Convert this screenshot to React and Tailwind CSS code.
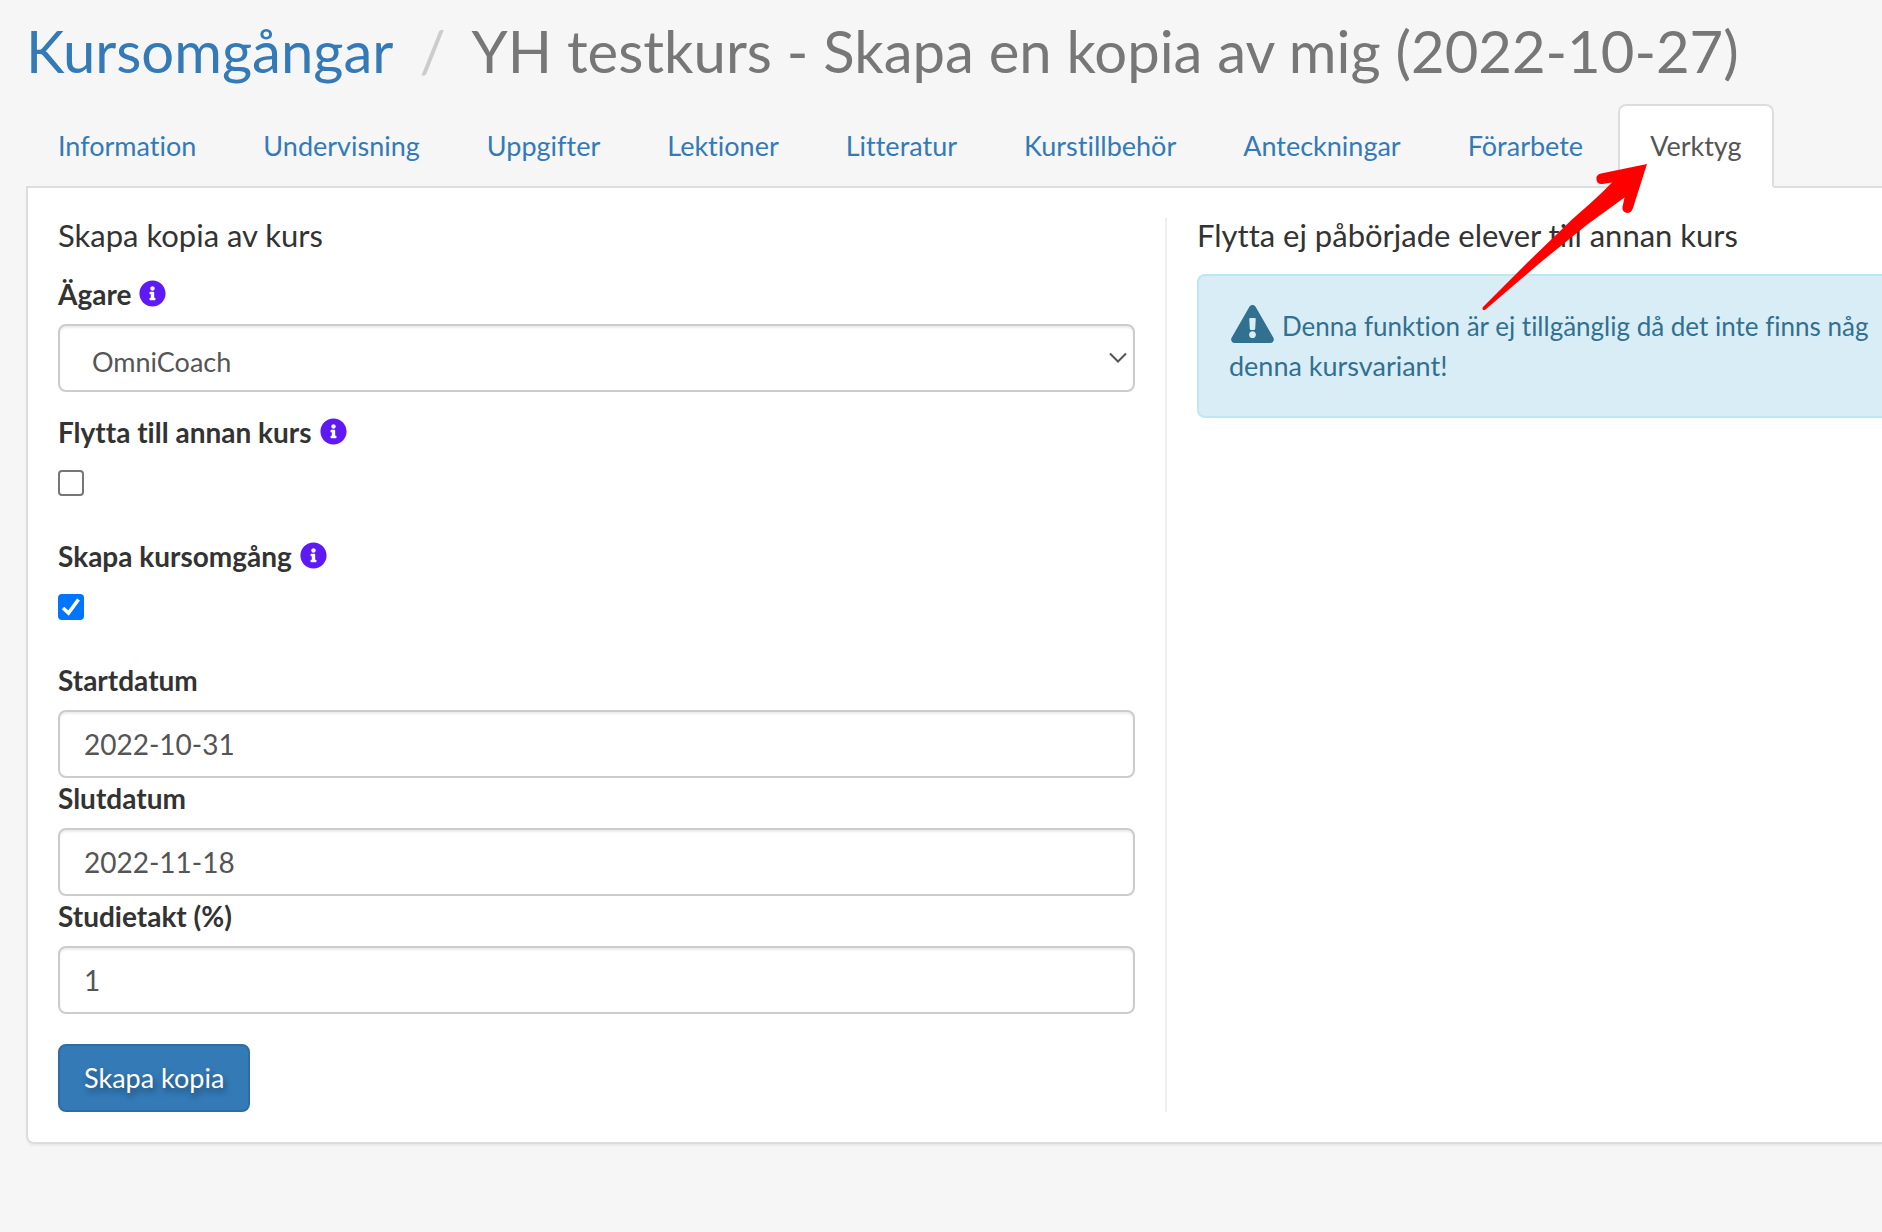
import React, { useState } from 'react'
import { FaExclamationTriangle, FaInfoCircle } from 'react-icons/fa'

const tabs = [
  'Information',
  'Undervisning',
  'Uppgifter',
  'Lektioner',
  'Litteratur',
  'Kurstillbehör',
  'Anteckningar',
  'Förarbete',
  'Verktyg',
]

const inputClass = 'block w-full h-[68px] rounded-lg border-2 border-[#ccc] bg-white text-[#555] shadow-[inset_0_2px_2px_rgba(0,0,0,0.075)] outline-none focus:border-[#66afe9]'

const Arrow = () => (
  <svg className="absolute -left-[138px] top-[56px] z-10 pointer-events-none" width="172" height="154" viewBox="0 0 172 154" aria-hidden="true">
    <path
      d="M167 4 L121 13.5 C117 14.5 116 17 116.5 19.5 C117 23 119 24.5 122.5 24 L132 22.5 C118 37 104 49 92 59.5 L48 102 L3 147 C1.5 149 3.5 151 5.5 149.5 L54 108 C74 91 92 77 108 64 L144.5 37.5 L142.5 47 C142 50 143.5 52.5 147 53 C150 53 152 51.5 153 48 Z"
      fill="#f00"
    />
  </svg>
)

const Label = ({ htmlFor, info, children }) => (
  <div className="flex items-center h-10">
    <label htmlFor={htmlFor} className="text-[28px] font-bold">{children}</label>
    {info && (
      <button type="button" aria-label="Info" className="ml-2 mb-[2px] text-[#5f19f5] cursor-pointer">
        <FaInfoCircle className="size-[27px]" />
      </button>
    )}
  </div>
)

const TextField = ({ id, label, value, onChange }) => (
  <div>
    <Label htmlFor={id}>{label}</Label>
    <input id={id} name={id} type="text" value={value} onChange={onChange} className={`${inputClass} mt-[10px] px-6 text-[28px]`} />
  </div>
)

const CheckField = ({ id, label, checked, onChange }) => (
  <div className="mb-10">
    <Label htmlFor={id} info>{label}</Label>
    <div className="relative mt-[18px] size-[26px]">
      <input
        id={id}
        name={id}
        type="checkbox"
        checked={checked}
        onChange={onChange}
        className="block size-[26px] appearance-none rounded border-2 border-[#767676] bg-white checked:border-[#0075ff] checked:bg-[#0075ff]"
      />
      {checked && (
        <svg className="absolute inset-0 pointer-events-none" width="26" height="26" viewBox="0 0 26 26" aria-hidden="true">
          <path d="M5 14 L10.5 19 L20.5 5.5" fill="none" stroke="#fff" strokeWidth="3.6" />
        </svg>
      )}
    </div>
  </div>
)

const App = () => {
  const [form, setForm] = useState({
    owner: 'OmniCoach',
    move: false,
    createRound: true,
    startDate: '2022-10-31',
    endDate: '2022-11-18',
    pace: '1',
  })

  const setText = (key) => (e) => setForm({ ...form, [key]: e.target.value })
  const setChecked = (key) => (e) => setForm({ ...form, [key]: e.target.checked })

  return (
    <div className="min-h-screen overflow-hidden bg-[#f6f6f6] pt-[21px] pl-[26px] pb-[88px] font-['Lato',sans-serif] text-[27px] leading-10 text-[#333] [font-variant-ligatures:none]">
      <h1 className="flex whitespace-nowrap text-[58px] leading-[60px] text-[#777]">
        <a href="#kursomgangar" className="text-[#337ab7]">Kursomgångar</a>
        <span className="px-[26px] text-[#ccc]">/</span>
        <span>YH testkurs - Skapa en kopia av mig (2022-10-27)</span>
      </h1>

      <ul className="mt-[23px] flex border-b-2 border-[#ddd]">
        {tabs.map((tab) => (
          <li key={tab} className="relative -mb-[2px] mr-[3px]">
            <a
              href={`#${tab.toLowerCase()}`}
              className={tab === 'Verktyg'
                ? 'block rounded-t-lg border-2 border-[#ddd] border-b-white bg-white px-[30px] py-5 text-[#555]'
                : 'block rounded-t-lg border-2 border-transparent px-[30px] py-5 text-[#337ab7]'}
            >
              {tab}
            </a>
            {tab === 'Verktyg' && <Arrow />}
          </li>
        ))}
      </ul>

      <div className="grid grid-cols-[60.8%_1fr] rounded-bl-lg border-b-2 border-l-2 border-[#ddd] bg-white py-[30px] pl-[30px] shadow-[0_2px_2px_rgba(0,0,0,0.05)]">
        <form className="border-r-2 border-[#eee] pr-[30px]" onSubmit={(e) => e.preventDefault()}>
          <h4 className="mb-[22px] text-[31px] leading-[34px]">Skapa kopia av kurs</h4>

          <Label htmlFor="owner" info>Ägare</Label>
          <div className="relative mt-[10px] mb-5">
            <select id="owner" name="owner" value={form.owner} onChange={setText('owner')} className={`${inputClass} appearance-none px-8 pt-2`}>
              <option>OmniCoach</option>
            </select>
            <svg className="absolute right-2 top-[28px] pointer-events-none" width="18" height="12" viewBox="0 0 18 12" fill="none" stroke="#555" strokeWidth="2" aria-hidden="true">
              <path d="M1 1.5 L9 9.5 L17 1.5" />
            </svg>
          </div>

          <CheckField id="move" label="Flytta till annan kurs" checked={form.move} onChange={setChecked('move')} />
          <CheckField id="createRound" label="Skapa kursomgång" checked={form.createRound} onChange={setChecked('createRound')} />

          <TextField id="startDate" label="Startdatum" value={form.startDate} onChange={setText('startDate')} />
          <TextField id="endDate" label="Slutdatum" value={form.endDate} onChange={setText('endDate')} />
          <TextField id="pace" label="Studietakt (%)" value={form.pace} onChange={setText('pace')} />

          <button
            type="submit"
            className="mt-[30px] block h-[68px] rounded-lg border-2 border-[#2e6da4] bg-[#337ab7] px-6 text-white [text-shadow:2px_4px_6px_rgba(0,0,0,0.4)]"
          >
            Skapa kopia
          </button>
        </form>

        <section className="pl-[30px]">
          <h4 className="mb-[22px] whitespace-nowrap text-[31px] leading-[34px]">Flytta ej påbörjade elever till annan kurs</h4>
          <div role="alert" className="rounded-l-lg border-y-2 border-l-2 border-[#bce8f1] bg-[#d9edf7] py-[30px] pl-[30px] text-[#31708f]">
            <div className="flex h-10 items-center gap-2 whitespace-nowrap pl-[2px]">
              <FaExclamationTriangle className="mb-1 h-[38px] w-[43px]" />
              <span className="text-[26px]">Denna funktion är ej tillgänglig då det inte finns någ</span>
            </div>
            <p>denna kursvariant!</p>
          </div>
        </section>
      </div>
    </div>
  )
}

export default App
